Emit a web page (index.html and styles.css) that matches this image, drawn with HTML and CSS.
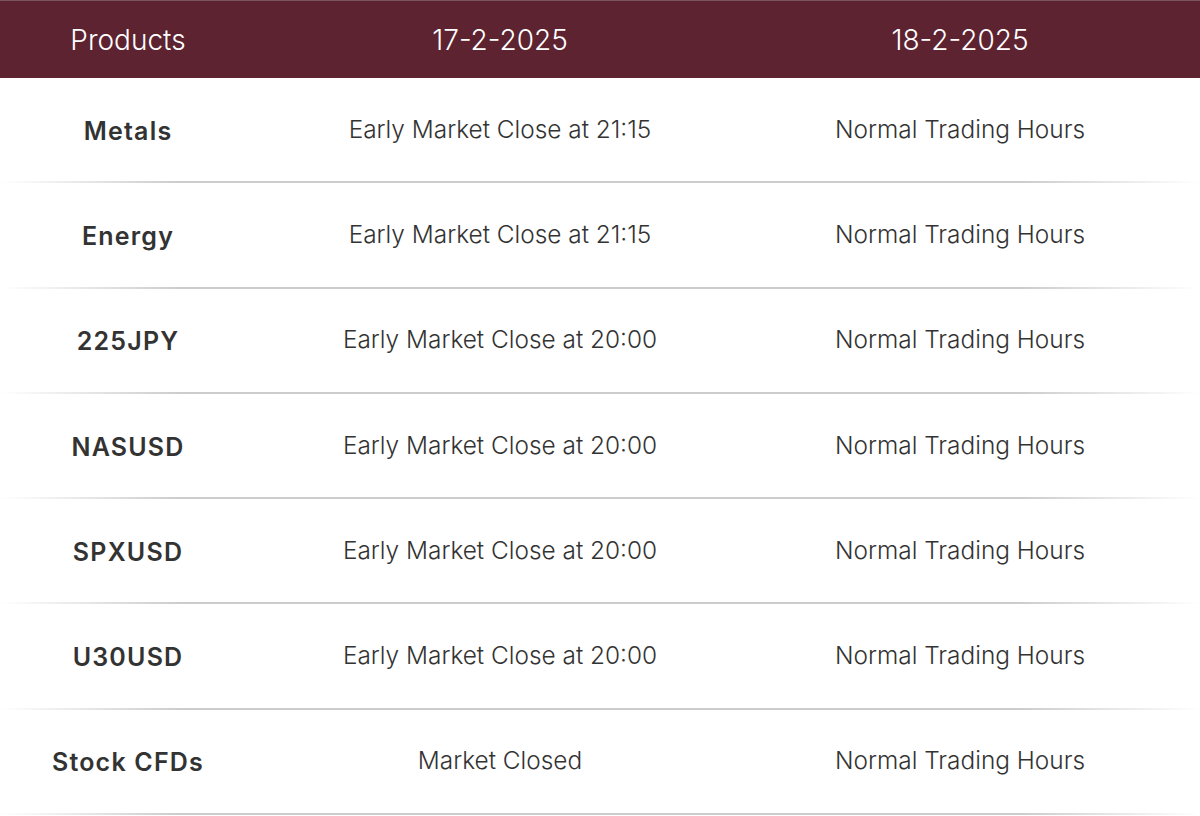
FILE: index.html
```html
<!DOCTYPE html>
<html>
<head>
<meta charset="utf-8">
<link rel="stylesheet" href="styles.css">
</head>
<body>
<div class="table">
  <div class="row head">
    <div class="cell c1">Products</div>
    <div class="cell c2">17-2-2025</div>
    <div class="cell c3">18-2-2025</div>
  </div>
  <div class="row">
    <div class="cell c1 prod">Metals</div>
    <div class="cell c2">Early Market Close at 21:15</div>
    <div class="cell c3">Normal Trading Hours</div>
  </div>
  <div class="row">
    <div class="cell c1 prod">Energy</div>
    <div class="cell c2">Early Market Close at 21:15</div>
    <div class="cell c3">Normal Trading Hours</div>
  </div>
  <div class="row">
    <div class="cell c1 prod">225JPY</div>
    <div class="cell c2">Early Market Close at 20:00</div>
    <div class="cell c3">Normal Trading Hours</div>
  </div>
  <div class="row">
    <div class="cell c1 prod">NASUSD</div>
    <div class="cell c2">Early Market Close at 20:00</div>
    <div class="cell c3">Normal Trading Hours</div>
  </div>
  <div class="row">
    <div class="cell c1 prod">SPXUSD</div>
    <div class="cell c2">Early Market Close at 20:00</div>
    <div class="cell c3">Normal Trading Hours</div>
  </div>
  <div class="row">
    <div class="cell c1 prod">U30USD</div>
    <div class="cell c2">Early Market Close at 20:00</div>
    <div class="cell c3">Normal Trading Hours</div>
  </div>
  <div class="row">
    <div class="cell c1 prod">Stock CFDs</div>
    <div class="cell c2">Market Closed</div>
    <div class="cell c3">Normal Trading Hours</div>
  </div>
</div>
</body>
</html>
```

FILE: styles.css
```css
html, body {
  margin: 0;
  padding: 0;
  background: #ffffff;
}
body {
  font-family: "Inter", "Liberation Sans", sans-serif;
  color: #333333;
}
.table {
  width: 1200px;
  display: flex;
  flex-direction: column;
}
.row {
  display: grid;
  grid-template-columns: 256px 488px 432px 24px;
  height: 105.3px;
  position: relative;
  font-size: 24.4px;
  font-weight: 300;
}
.row::after {
  content: "";
  position: absolute;
  left: 0;
  right: 0;
  bottom: 0;
  height: 2px;
  background: linear-gradient(to right, rgba(200,200,200,0) 0%, #cccccc 15%, #cccccc 85%, rgba(200,200,200,0) 100%);
}
.row.head {
  height: 78px;
  background: #5d2331;
  border-top: 1px solid #7a5760;
  box-sizing: border-box;
  color: #ffffff;
  font-size: 28px;
  font-weight: 300;
}
.row.head::after {
  display: none;
}
.cell {
  display: flex;
  align-items: center;
  justify-content: center;
  padding-bottom: 4px;
}
.head .cell {
  padding-bottom: 0;
}
.prod {
  font-weight: 600;
  font-size: 25px;
  letter-spacing: 1.2px;
  padding-bottom: 0;
}
```
